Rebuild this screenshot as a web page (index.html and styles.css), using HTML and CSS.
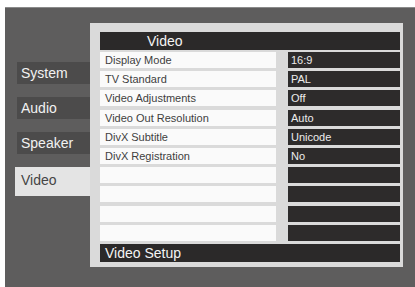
FILE: index.html
```html
<!DOCTYPE html>
<html>
<head>
<meta charset="utf-8">
<link rel="stylesheet" href="styles.css">
</head>
<body>
<div class="frame">
  <nav class="sidebar">
    <div class="tab">System</div>
    <div class="tab">Audio</div>
    <div class="tab">Speaker</div>
    <div class="tab active">Video</div>
  </nav>
  <section class="panel">
    <div class="header">Video</div>
    <div class="rows">
      <div class="label">Display Mode</div><div class="value">16:9</div>
      <div class="label">TV Standard</div><div class="value">PAL</div>
      <div class="label">Video Adjustments</div><div class="value">Off</div>
      <div class="label">Video Out Resolution</div><div class="value">Auto</div>
      <div class="label">DivX Subtitle</div><div class="value">Unicode</div>
      <div class="label">DivX Registration</div><div class="value">No</div>
      <div class="label"></div><div class="value"></div>
      <div class="label"></div><div class="value"></div>
      <div class="label"></div><div class="value"></div>
      <div class="label"></div><div class="value"></div>
    </div>
    <div class="footer">Video Setup</div>
  </section>
</div>
</body>
</html>
```
FILE: styles.css
```css
html, body {
  margin: 0;
  padding: 0;
  background: #ffffff;
  width: 415px;
  height: 287px;
  overflow: hidden;
}
body {
  font-family: "Liberation Sans", Arial, sans-serif;
}
.frame {
  margin: 7px 0 0 5px;
  width: 410px;
  height: 280px;
  background: #5e5d5d;
  border-top: 1px solid #8a8a8a;
  box-sizing: border-box;
  display: flex;
}
.sidebar {
  width: 85px;
  padding: 54px 0 0 12px;
  box-sizing: border-box;
  display: flex;
  flex-direction: column;
  gap: 13px;
}
.tab {
  height: 22px;
  background: #4c4b4b;
  color: #f2f2f2;
  font-size: 14px;
  line-height: 22px;
  padding-left: 4px;
}
.tab.active {
  height: 29px;
  line-height: 27px;
  margin-top: 0;
  margin-left: -2px;
  padding-left: 6px;
  background: #e4e4e4;
  color: #454545;
}
.panel {
  margin-top: 15px;
  width: 313px;
  height: 244px;
  background: #dadada;
  padding: 9px 3px 4px 10px;
  box-sizing: border-box;
  display: flex;
  flex-direction: column;
}
.header {
  height: 18px;
  background: #2b2929;
  color: #f4f4f4;
  font-size: 14px;
  line-height: 18px;
  padding-left: 47px;
}
.rows {
  margin-top: 2px;
  display: grid;
  grid-template-columns: 176px 112px;
  column-gap: 12px;
  grid-auto-rows: 16px;
  row-gap: 3.2px;
}
.label {
  background: #fafafa;
  color: #3e3e3e;
  font-size: 11px;
  line-height: 16px;
  padding-left: 5px;
}
.value {
  background: #2d2b2b;
  color: #ececec;
  font-size: 11px;
  line-height: 16px;
  padding-left: 3px;
}
.footer {
  margin-top: 3px;
  height: 18px;
  background: #2b2929;
  color: #f4f4f4;
  font-size: 14px;
  line-height: 18px;
  padding-left: 5px;
}
```
